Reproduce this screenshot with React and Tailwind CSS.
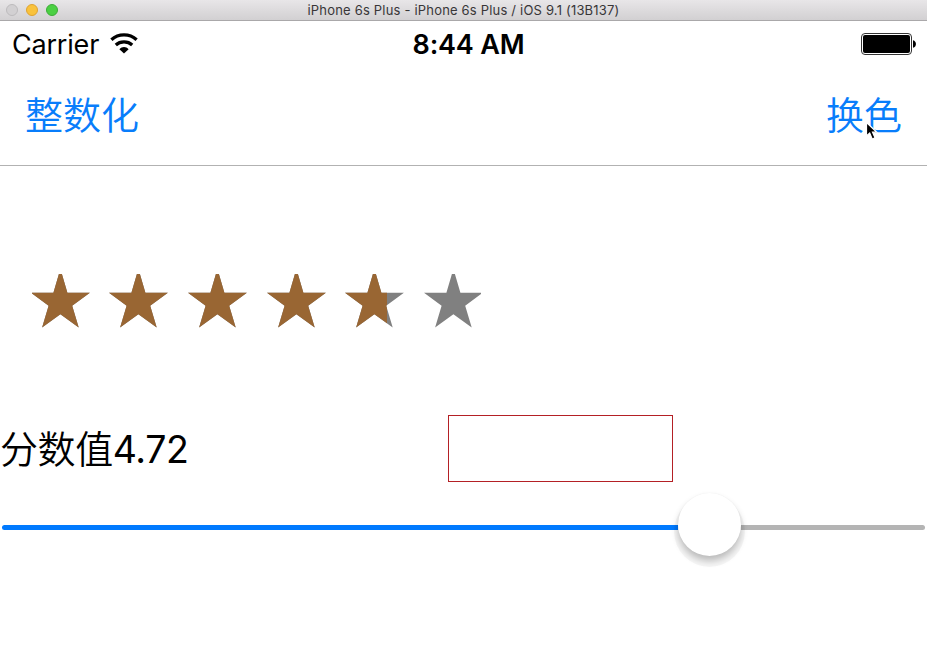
const BLUE_TEXT = "font-['Noto_Sans_CJK_SC',sans-serif] font-[350] text-[38px] leading-[56px] text-[#087dfb]";

const STAR = "27.9,0 30.9,0 36.4,18.7 58.9,18.7 41.2,31.7 47.7,53.4 29.4,40.2 11.1,53.4 17.6,31.7 -0.1,18.7 22.4,18.7";

function Star({ fill }) {
  return (
    <div className="relative mr-[19.7px] h-[54px] w-[59px] shrink-0">
      <svg className="block h-[54px] w-[59px]" viewBox="0 0 59 54">
        <polygon points={STAR} fill="#808080" />
      </svg>
      <div className="absolute inset-y-0 left-0 overflow-hidden" style={{ width: fill * 59 }}>
        <svg className="block h-[54px] w-[59px] max-w-none" viewBox="0 0 59 54">
          <polygon points={STAR} fill="#996633" />
        </svg>
      </div>
    </div>
  );
}

function TitleBar() {
  return (
    <header className="relative flex h-[21px] items-center justify-center border-b border-[#aaa8aa] bg-linear-to-b from-[#e8e6e8] to-[#d2d0d2]">
      <div className="absolute top-[4px] left-[6px] flex gap-[8px]">
        <span className="size-[12px] rounded-full border border-[#bdbbbd] bg-[#d2d0d2]" />
        <span className="size-[12px] rounded-full border border-[#dfa330] bg-[#f9c23c]" />
        <span className="size-[12px] rounded-full border border-[#3dac38] bg-[#4bd043]" />
      </div>
      <span className="font-[Inter,sans-serif] text-[13px] leading-[20px] tracking-[0.19px] whitespace-nowrap text-[#383638]">
        iPhone 6s Plus - iPhone 6s Plus / iOS 9.1 (13B137)
      </span>
    </header>
  );
}

function StatusBar() {
  return (
    <div className="grid h-[47px] grid-cols-3 items-center pr-[11px] pl-[11px] font-[Inter,sans-serif] text-[27px] leading-[47px] text-black">
      <div className="flex items-center">
        <span className="w-[99px] pl-px tracking-[-0.2px] whitespace-nowrap">Carrier</span>
        <svg className="-mt-[2px] h-[21px] w-[28px]" viewBox="0 0 28 21" fill="none" stroke="#000">
          <path d="M1.4 6.8C8.5 .3 19.5 .3 26.6 6.8" strokeWidth="3.3" />
          <path d="M5.8 11.9C10.3 7.9 17.7 7.9 22.2 11.9" strokeWidth="3.3" />
          <path d="M14 20.4L9.4 16.2C12 13.4 16 13.4 18.6 16.2Z" fill="#000" stroke="none" />
        </svg>
      </div>
      <span className="pl-[10px] text-center font-semibold tracking-[-0.2px] whitespace-nowrap">8:44 AM</span>
      <svg className="-mt-px h-[22px] w-[55px] justify-self-end" viewBox="0 0 55 22">
        <rect x="0.5" y=".5" width="50" height="21" rx="3.5" fill="#fff" stroke="#333" />
        <rect x="2" y="2" width="47" height="18" rx="2" fill="#000" />
        <path d="M52 7.2C55.9 8 55.9 14 52 14.8Z" fill="#000" />
      </svg>
    </div>
  );
}

export default function App() {
  const ratings = [1, 1, 1, 1, 0.705, 0];
  return (
    <main className="relative h-[660px] w-[927px] overflow-hidden bg-white">
      <TitleBar />
      <StatusBar />
      <nav className="flex h-[98px] items-start justify-between border-b border-[#b2b2b2] pt-[17px] pr-[25px] pl-[25px]">
        <button className={BLUE_TEXT}>整数化</button>
        <button className={BLUE_TEXT}>换色</button>
      </nav>

      <section className="mt-[108px] ml-[32px] h-[54px] w-[449px] overflow-hidden">
        <div className="-ml-[1.5px] flex">
          {ratings.map((fill, i) => (
            <Star key={i} fill={fill} />
          ))}
        </div>
      </section>

      <section className="mt-[87px] flex h-[67px] items-center">
        <p className="-mt-px flex w-[448px] items-baseline text-[38px] leading-[56px] text-black">
          <span className="font-['Noto_Sans_CJK_SC',sans-serif] font-[350] tracking-[-0.4px]">分数值</span>
          <span className="font-[Inter,sans-serif] text-[37.5px] tracking-[-0.4px]">4.72</span>
        </p>
        <div className="h-[67px] w-[225px] border border-[#b42025]" />
      </section>

      <div className="mt-[11px] flex h-[68px] items-center px-[2px]">
        <div className="h-[5px] w-[676px] rounded-l-full bg-[#007aff]" />
        <div className="relative z-10 -mt-[5px] size-[63px] shrink-0 rounded-full bg-white shadow-[0_5px_7px_rgba(0,0,0,0.24),0_0_1px_rgba(0,0,0,0.08),0_7px_0_4px_rgba(0,0,0,0.035)]" />
        <div className="h-[5px] flex-1 rounded-r-full bg-[#b4b4b4]" />
      </div>

      <svg className="absolute top-[121px] left-[865px] h-[20px] w-[13px]" viewBox="0 0 13 20">
        <path d="M1.5 1.5V15L4.7 12L7.2 18L10 16.8L7.5 11.2H11.8Z" fill="#000" stroke="#fff" strokeWidth="1.2" />
      </svg>
    </main>
  );
}
